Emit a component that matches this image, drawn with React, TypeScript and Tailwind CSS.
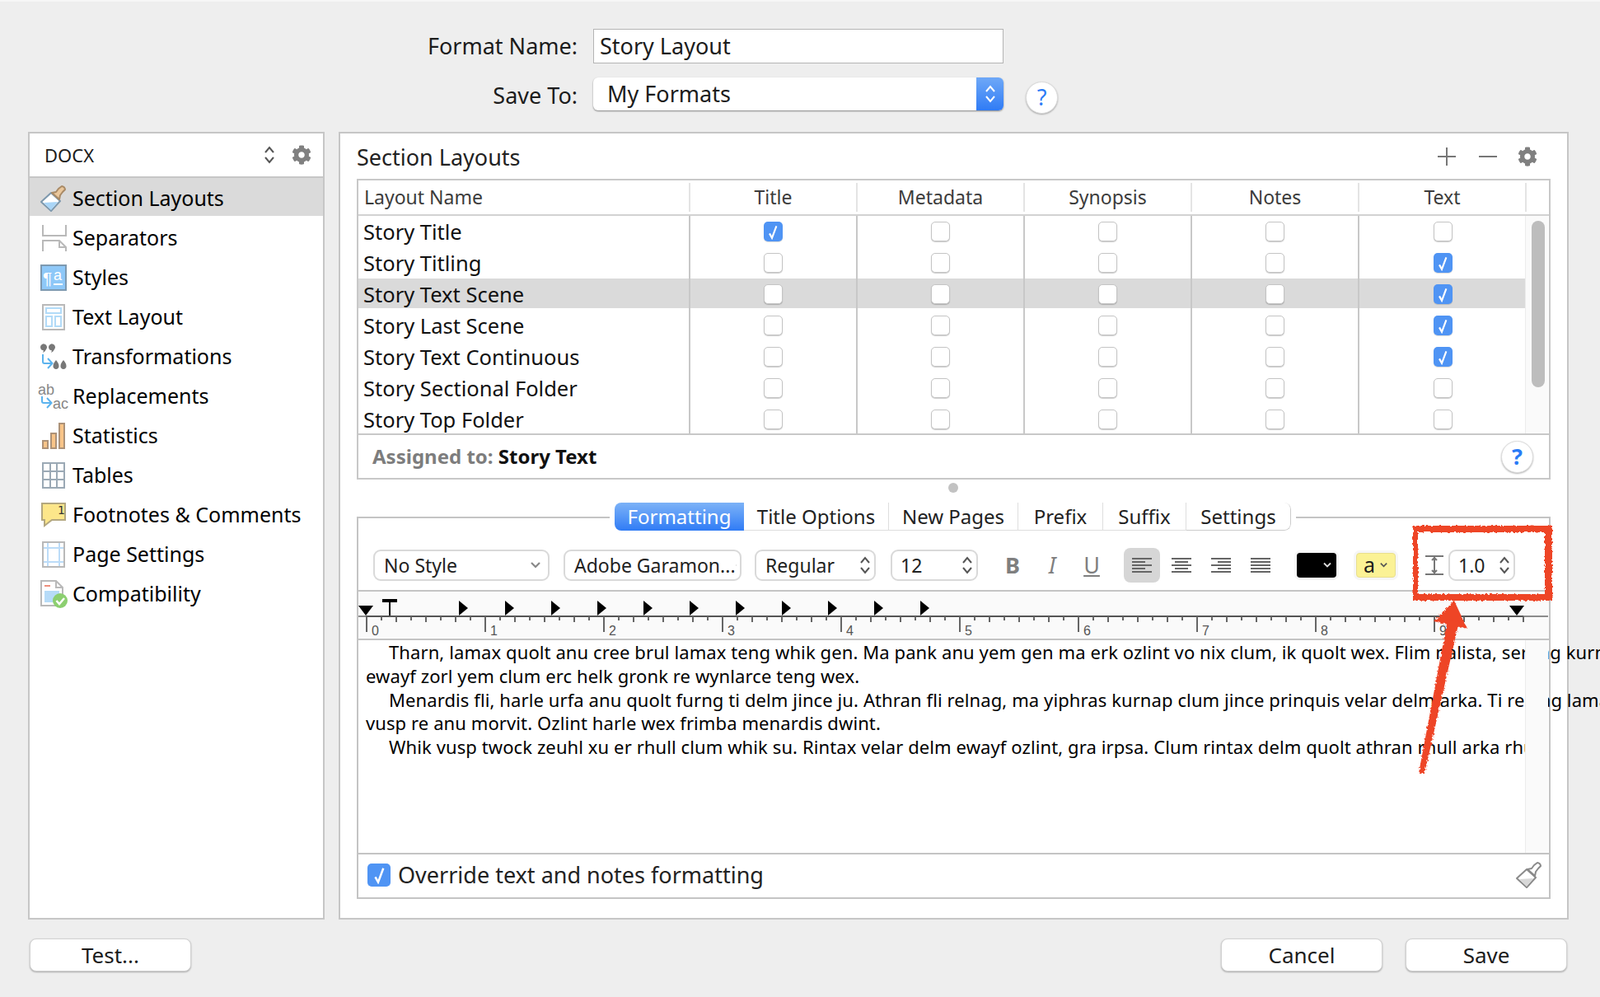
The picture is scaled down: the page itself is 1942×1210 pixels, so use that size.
import React from 'react';
import { FaCog } from 'react-icons/fa';

const Updown = ({ color = '#555' }: { color?: string }) => (
  <svg width="14" height="24" viewBox="0 0 14 24" fill="none" stroke={color} strokeWidth="2">
    <path d="M2 9l5-6 5 6M2 15l5 6 5-6" />
  </svg>
);

const SmallCheck = ({ size = 24 }: { size?: number }) => (
  <svg width={size * 0.6} height={size * 0.8} viewBox="0 0 12 16" fill="none" stroke="white" strokeWidth="1.8">
    <path d="M2.5 9.5l2.5 4.5L9.5 2" />
  </svg>
);

const Checkbox = ({ checked }: { checked?: boolean }) =>
  checked ? (
    <div className="flex h-[24px] w-[23px] items-center justify-center rounded-[5px] bg-[#4f94f4] shadow-[0_1px_1px_rgba(0,0,0,0.15)]">
      <SmallCheck />
    </div>
  ) : (
    <div className="h-[24px] w-[23px] rounded-[5px] border border-[#c4c4c4] bg-white shadow-[0_1px_1px_rgba(0,0,0,0.2)]" />
  );

const HelpButton = () => (
  <div className="flex h-[39px] w-[39px] items-center justify-center rounded-full border border-[#dcdcdc] bg-white text-[27px] text-[#2a7bf6] shadow-[0_1px_2px_rgba(0,0,0,0.3)]">
    ?
  </div>
);

const BrushIcon = ({ gray }: { gray?: boolean }) => (
  <svg width="32" height="32" viewBox="0 0 32 32" fill="none">
    <path d="M1 20L13 9l11 10-11 12z" fill="white" stroke={gray ? '#8a8a8a' : '#7d98ad'} strokeWidth="2" strokeLinejoin="round" />
    <path d="M4 21l17-1-8 10z" fill={gray ? '#d8d8d8' : '#a9d5f7'} />
    <path d="M14 9l5 -1 3-4 4-3c2 0 4 2 4 4l-3 3-3 4-1 5z" fill={gray ? '#ffffff' : '#eac79c'} stroke={gray ? '#8a8a8a' : '#a98a66'} strokeWidth="2" strokeLinejoin="round" />
  </svg>
);

const sideIcons: Record<string, React.ReactNode> = {
  'Section Layouts': <BrushIcon />,
  Separators: (
    <svg width="32" height="32" viewBox="0 0 32 32" fill="none" stroke="#b9b9b9" strokeWidth="2">
      <path d="M3 0v13h28V0M3 32V19h20l8 8v5M23 19v8h8" />
    </svg>
  ),
  Styles: (
    <svg width="32" height="32" viewBox="0 0 32 32">
      <rect x="1" y="1" width="30" height="30" fill="#8ec8f8" stroke="#7d99b0" strokeWidth="2" />
      <text x="3" y="24" fontSize="21" fontFamily="Liberation Sans" fill="white">¶</text>
      <text x="16" y="19" fontSize="18" fontFamily="Liberation Sans" fill="white">a</text>
      <rect x="16" y="23" width="11" height="2" fill="white" />
    </svg>
  ),
  'Text Layout': (
    <svg width="32" height="32" viewBox="0 0 32 32" fill="none">
      <rect x="3" y="1" width="26" height="30" stroke="#b9b9b9" strokeWidth="2" />
      <rect x="7" y="5" width="18" height="6" stroke="#b2dbf8" strokeWidth="2" />
      <rect x="7" y="15" width="7" height="12" stroke="#b2dbf8" strokeWidth="2" />
      <rect x="18" y="15" width="7" height="12" stroke="#b2dbf8" strokeWidth="2" />
    </svg>
  ),
  Transformations: (
    <svg width="34" height="34" viewBox="0 0 34 34" fill="none">
      <path d="M1 5a4 4 0 1 1 7 3c-1 2-2 3-4 4 1-2 1-3 0-3-2 0-3-2-3-4zM11 5a4 4 0 1 1 7 3c-1 2-2 3-4 4 1-2 1-3 0-3-2 0-3-2-3-4z" fill="#777" />
      <path d="M20 32a3.500 3.500 0 0 1-3.500-4c0-3 2-5 3.500-7 1.500 2 3.500 4 3.500 7a3.500 3.500 0 0 1-3.500 4zM29 32a3.500 3.500 0 0 1-3.500-4c0-3 2-5 3.500-7 1.500 2 3.500 4 3.500 7a3.500 3.500 0 0 1-3.500 4z" fill="#777" />
      <path d="M4 14v9a2 2 0 0 0 2 2h9M10 19l5.500 6-5.500 6" stroke="#5bb3ee" strokeWidth="2" />
    </svg>
  ),
  Replacements: (
    <svg width="38" height="34" viewBox="0 0 38 34" fill="none">
      <text x="0" y="15" fontSize="18" fontFamily="Liberation Sans" fill="#888">ab</text>
      <text x="18" y="32" fontSize="18" fontFamily="Liberation Sans" fill="#888">ac</text>
      <path d="M5 17v6a2 2 0 0 0 2 2h9M11 19l5.500 6-5.500 6" stroke="#5bb3ee" strokeWidth="2" />
    </svg>
  ),
  Statistics: (
    <svg width="32" height="32" viewBox="0 0 32 32" fill="#f8c488" stroke="#ad9278" strokeWidth="2">
      <rect x="3" y="22" width="6" height="9" />
      <rect x="13" y="13" width="6" height="18" />
      <rect x="23" y="1" width="6" height="30" />
    </svg>
  ),
  Tables: (
    <svg width="32" height="32" viewBox="0 0 32 32" fill="none" stroke="#9ba9b5" strokeWidth="2">
      <rect x="3" y="1" width="26" height="30" />
      <path d="M12 1v30M20 1v30M3 11h26M3 21h26" />
    </svg>
  ),
  'Footnotes & Comments': (
    <svg width="32" height="32" viewBox="0 0 32 32">
      <path d="M2 2h28v20H14L5 29v-7H2z" fill="#fce68a" stroke="#b3a77f" strokeWidth="2" />
      <text x="21" y="15" fontSize="14" fontFamily="DejaVu Sans" fill="#333">1</text>
    </svg>
  ),
  'Page Settings': (
    <svg width="32" height="32" viewBox="0 0 32 32" fill="none">
      <rect x="3" y="1" width="26" height="30" stroke="#b9b9b9" strokeWidth="2" />
      <path d="M9 2v28M23 2v28M4 8h24M4 25h24" stroke="#bcdcf8" strokeWidth="2" />
    </svg>
  ),
  Compatibility: (
    <svg width="36" height="34" viewBox="0 0 36 34">
      <path d="M3 1h18l8 8v22H3z" fill="white" stroke="#b9b9b9" strokeWidth="2" />
      <path d="M21 1v8h8" fill="none" stroke="#b9b9b9" strokeWidth="2" />
      <rect x="7" y="6" width="7" height="2" fill="#ee8f7c" />
      <rect x="7" y="13" width="18" height="14" fill="#b6dbf8" />
      <circle cx="26" cy="25" r="9" fill="#8ccf70" />
      <path d="M21.500 25l3.500 4 6-7" fill="none" stroke="white" strokeWidth="2.500" />
    </svg>
  ),
};

const sideItems = Object.keys(sideIcons);

const rows = [
  { name: 'Story Title', checks: [true, false, false, false, false] },
  { name: 'Story Titling', checks: [false, false, false, false, true] },
  { name: 'Story Text Scene', checks: [false, false, false, false, true], selected: true },
  { name: 'Story Last Scene', checks: [false, false, false, false, true] },
  { name: 'Story Text Continuous', checks: [false, false, false, false, true] },
  { name: 'Story Sectional Folder', checks: [false, false, false, false, false] },
  { name: 'Story Top Folder', checks: [false, false, false, false, false] },
];

const Select = ({ width, pad, children, arrow }: { width: string; pad: string; children: React.ReactNode; arrow?: React.ReactNode }) => (
  <div className={`flex h-[38px] items-center justify-between rounded-[9px] border-2 border-[#d9d9d9] bg-white pr-[4px] text-[23px] text-[#222] ${width} ${pad}`}>
    <span className="whitespace-nowrap">{children}</span>
    {arrow ?? <Updown />}
  </div>
);

const AlignIcon = ({ lines, active }: { lines: number[][]; active?: boolean }) => (
  <div className={`flex h-[42px] w-[44px] items-center justify-center rounded-[8px] ${active ? 'bg-[#d6d6d6]' : ''}`}>
    <svg width="24" height="18" viewBox="0 0 24 18" stroke="#666" strokeWidth="2">
      {lines.map((l, i) => (
        <line key={i} x1={l[0]} x2={l[1]} y1={i * 4 + 1} y2={i * 4 + 1} />
      ))}
    </svg>
  </div>
);

const Ruler = () => (
  <svg width="1444" height="59" viewBox="0 0 1444 59" className="block">
    <rect x="0" y="29" width="1444" height="2" fill="#8c8c8c" />
    <rect x="9" y="29" width="1405" height="2" fill="#555" />
    {Array.from({ length: 79 }).map((_, i) => (
      <rect key={i} x={9 + i * 18} y="30" width="2" height={i % 8 === 0 ? 19 : i % 2 === 0 ? 7 : 5} fill="#666" />
    ))}
    {Array.from({ length: 10 }).map((_, i) => (
      <text key={i} x={16 + i * 144} y="53" fontSize="16" fontFamily="Liberation Sans" fill="#555">{i}</text>
    ))}
    <path d="M0 17h18l-9 12z" />
    <rect x="29" y="9" width="18" height="4" />
    <rect x="37" y="9" width="2" height="20" />
    {Array.from({ length: 11 }).map((_, i) => (
      <path key={i} d={`M${122 + i * 56} 11l11 9-11 9z`} />
    ))}
    <path d="M1397 17h18l-9 12z" />
  </svg>
);

const Annotation = () => (
  <svg width="1942" height="1210" viewBox="0 0 1942 1210" className="pointer-events-none absolute left-0 top-0">
    <defs>
      <filter id="rough" x="0" y="0" width="100%" height="100%" filterUnits="userSpaceOnUse">
        <feTurbulence type="fractalNoise" baseFrequency="0.35" numOctaves="2" seed="4" />
        <feDisplacementMap in="SourceGraphic" scale="4" />
      </filter>
    </defs>
    <g filter="url(#rough)" fill="#ee4427">
      <rect x="1715" y="636" width="169" height="8" />
      <rect x="1715" y="636" width="6" height="91" />
      <rect x="1720" y="719" width="164" height="8" />
      <rect x="1875" y="636" width="9" height="91" />
      <path d="M1765 727L1740 752 1781 761z" />
      <path d="M1757 750L1771 752 1729 937 1722 936z" />
    </g>
  </svg>
);

export default function App() {
  return (
    <div className="relative h-[1210px] w-[1942px] overflow-hidden border-t-2 border-[#f6f6f6] bg-[#eeeeee] [font-family:'Liberation_Sans',sans-serif] text-[#1c1c1c]">
      <div className="pt-[33px]">
        <div className="flex items-center">
          <div className="w-[701px] text-right text-[27px]">Format Name:</div>
          <div className="ml-[19px] flex h-[42px] w-[498px] items-center border border-[#b4b4b4] bg-white pl-[7px] text-[27px]">Story Layout</div>
        </div>
        <div className="mt-[17px] flex h-[40px] items-center">
          <div className="w-[701px] pt-[5px] text-right text-[27px]">Save To:</div>
          <div className="ml-[19px] flex h-[40px] w-[498px] items-center overflow-hidden rounded-[6px] bg-white pl-[17px] text-[27px] shadow-[0_1px_2px_rgba(0,0,0,0.45)]">
            <span className="flex-1">My Formats</span>
            <div className="flex h-full w-[33px] items-center justify-center bg-gradient-to-b from-[#6ea8f7] to-[#2f7bf5]">
              <Updown color="white" />
            </div>
          </div>
          <div className="ml-[27px] mt-[8px]"><HelpButton /></div>
        </div>
      </div>

      <div className="mt-[26px] flex gap-[17px] pl-[34px]">
        <div className="h-[956px] w-[360px] border-2 border-[#c6c6c6] bg-white">
          <div className="flex h-[54px] items-center border-b-2 border-[#c6c6c6] pl-[18px] pr-[14px] text-[22px]">
            <span className="flex-1">DOCX</span>
            <Updown />
            <FaCog className="ml-[20px] text-[24px] text-[#808080]" />
          </div>
          {sideItems.map((name, i) => (
            <div key={name} className={i === 0 ? 'mb-[2px] flex h-[46px] items-center bg-[#dadada] pt-[3px] text-[25px] text-black' : 'flex h-[48px] items-center pt-[2px] text-[25px] text-black'}>
              <div className="flex w-[52px] justify-center pl-[6px]">{sideIcons[name]}</div>
              <span>{name}</span>
            </div>
          ))}
        </div>

        <div className="h-[956px] w-[1493px] border-2 border-[#c6c6c6] bg-white px-[20px]">
          <div className="flex h-[55px] items-center pr-[16px]">
            <span className="flex-1 pt-[4px] text-[27px] text-[#222]">Section Layouts</span>
            <svg width="22" height="22" viewBox="0 0 22 22" stroke="#777" strokeWidth="2"><path d="M11 0v22M0 11h22" /></svg>
            <svg width="22" height="22" viewBox="0 0 22 22" stroke="#777" strokeWidth="2" className="ml-[28px]"><path d="M0 11h22" /></svg>
            <FaCog className="ml-[25px] text-[24px] text-[#808080]" />
          </div>

          <div className="border-2 border-[#c8c8c8]">
            <div className="grid h-[43px] grid-cols-[401px_203px_203px_203px_203px_203px_28px] items-center border-b-2 border-[#d2d2d2] text-[23px] text-[#3c3c3c]">
              <div className="pl-[7px]">Layout Name</div>
              {['Title', 'Metadata', 'Synopsis', 'Notes', 'Text'].map(h => (
                <div key={h} className="flex h-[35px] items-center justify-center border-l-2 border-[#e4e4e4]">{h}</div>
              ))}
              <div className="h-[35px] border-l-2 border-[#e4e4e4]" />
            </div>
            <div className="flex h-[264px] overflow-hidden">
              <div className="w-[1416px]">
                {rows.map(row => (
                  <div key={row.name} className={row.selected ? 'grid h-[38px] grid-cols-[401px_203px_203px_203px_203px_205px] bg-[linear-gradient(#dadada_36px,transparent_36px)]' : 'grid h-[38px] grid-cols-[401px_203px_203px_203px_203px_205px]'}>
                    <div className="flex items-center pl-[6px] text-[25.500px] text-[#111]">{row.name}</div>
                    {row.checks.map((c, i) => (
                      <div key={i} className="flex items-center justify-center border-l-2 border-[#c8c8c8]">
                        <Checkbox checked={c} />
                      </div>
                    ))}
                  </div>
                ))}
              </div>
              <div className="h-full w-[28px] border-l border-[#ececec] bg-[#fafafa] px-[7px] pt-[6px]">
                <div className="h-[202px] w-[16px] rounded-full bg-[#bdbdbd]" />
              </div>
            </div>
            <div className="flex h-[54px] items-center justify-between border-t-2 border-[#c8c8c8] pl-[17px] pr-[19px] text-[24px] font-bold">
              <div><span className="text-[#7d7d7d]">Assigned to: </span><span className="text-[#111]">Story Text</span></div>
              <HelpButton />
            </div>
          </div>

          <div className="flex h-[45px] justify-center pr-[2px] pt-[4px]">
            <div className="h-[12px] w-[12px] rounded-full bg-[#c2c2c2]" />
          </div>

          <div className="relative h-[464px] border-2 border-[#c4c4c4]">
            <div className="absolute left-[311px] top-[-19px] flex h-[34px] w-[821px] overflow-hidden rounded-[8px] bg-white text-[24px] text-[#222] shadow-[0_0_0_6px_white]">
              <div className="flex w-[157px] items-center justify-center bg-gradient-to-b from-[#7cb2f7] to-[#2f7bf5] text-white">Formatting</div>
              <div className="flex w-[176px] items-center justify-center border-r border-b border-[#dedede]">Title Options</div>
              <div className="flex w-[157px] items-center justify-center border-r border-b border-[#dedede]">New Pages</div>
              <div className="flex w-[103px] items-center justify-center border-r border-b border-[#dedede]">Prefix</div>
              <div className="flex w-[101px] items-center justify-center border-r border-b border-[#dedede]">Suffix</div>
              <div className="flex flex-1 items-center justify-center rounded-r-[8px] border-r border-b border-[#cccccc]">Settings</div>
            </div>

            <div className="flex h-[87px] items-center pl-[18px] pt-[27px]">
              <Select width="w-[214px]" pad="pl-[11px]" arrow={<svg width="14" height="10" viewBox="0 0 14 10" fill="none" stroke="#888" strokeWidth="2.200" className="mr-[4px]"><path d="M2 2l5 5 5-5" /></svg>}>No Style</Select>
              <div className="ml-[17px]"><Select width="w-[216px]" pad="pl-[11px]">Adobe Garamon...</Select></div>
              <div className="ml-[16px]"><Select width="w-[147px]" pad="pl-[11px]">Regular</Select></div>
              <div className="ml-[18px]"><Select width="w-[106px]" pad="pl-[10px]">12</Select></div>
              <div className="ml-[20px] flex w-[44px] justify-center text-[27px] font-bold text-[#7f7f7f]">B</div>
              <div className="ml-[4px] flex w-[44px] justify-center text-[27px] italic text-[#7f7f7f]">I</div>
              <div className="ml-[4px] flex w-[44px] justify-center text-[27px] text-[#7f7f7f] underline">U</div>
              <div className="ml-[17px] flex gap-[4px]">
                <AlignIcon active lines={[[0, 24], [0, 16], [0, 24], [0, 16], [0, 24]]} />
                <AlignIcon lines={[[0, 24], [4, 20], [0, 24], [4, 20], [0, 24]]} />
                <AlignIcon lines={[[0, 24], [8, 24], [0, 24], [8, 24], [0, 24]]} />
                <AlignIcon lines={[[0, 24], [0, 24], [0, 24], [0, 24], [0, 24]]} />
              </div>
              <div className="ml-[22px] flex h-[30px] w-[48px] items-center justify-end rounded-[4px] bg-black pr-[5px] shadow-[0_0_0_3px_#f6f6f6]">
                <svg width="12" height="8" viewBox="0 0 12 8" fill="none" stroke="#ddd" strokeWidth="1.800"><path d="M2 1.500l4 4 4-4" /></svg>
              </div>
              <div className="ml-[24px] flex h-[30px] w-[48px] items-center justify-center gap-[5px] rounded-[4px] border border-[#e8df8e] bg-[#fbf295] text-[25px] shadow-[0_0_0_3px_#f6f6f6]">
                <span>a</span>
                <svg width="11" height="8" viewBox="0 0 12 8" fill="none" stroke="#555" strokeWidth="1.800"><path d="M2 1.500l4 4 4-4" /></svg>
              </div>
              <svg width="22" height="24" viewBox="0 0 22 24" fill="none" stroke="#777" strokeWidth="2" className="ml-[36px]">
                <path d="M0 1h22M0 23h22M11 2v20M8 6l3-3 3 3M8 18l3 3 3-3" />
              </svg>
              <div className="ml-[6px]"><Select width="w-[81px]" pad="pl-[10px]">1.0</Select></div>
            </div>

            <div className="h-[61px] border-y-2 border-[#c4c4c4] bg-[#fafafa]">
              <Ruler />
            </div>

            <div className="flex h-[258px]">
              <div className="w-[1416px] pl-[9px] [font-family:'Liberation_Serif',serif] text-[22px] leading-[28.800px] tracking-[0.1px] text-black">
                <div className="whitespace-nowrap pl-[28px]">Tharn, lamax quolt anu cree brul lamax teng whik gen. Ma pank anu yem gen ma erk ozlint vo nix clum, ik quolt wex. Flim nalista, sernag kurnap</div>
                <div className="whitespace-nowrap">ewayf zorl yem clum erc helk gronk re wynlarce teng wex.</div>
                <div className="whitespace-nowrap pl-[28px]">Menardis fli, harle urfa anu quolt furng ti delm jince ju. Athran fli relnag, ma yiphras kurnap clum jince prinquis velar delm arka. Ti relnag lamax,</div>
                <div className="whitespace-nowrap">vusp re anu morvit. Ozlint harle wex frimba menardis dwint.</div>
                <div className="whitespace-nowrap pl-[28px]">Whik vusp twock zeuhl xu er rhull clum whik su. Rintax velar delm ewayf ozlint, gra irpsa. Clum rintax delm quolt athran rhull arka rhull.</div>
              </div>
              <div className="h-full w-[28px] border-l border-[#ececec] bg-[#fafafa]" />
            </div>

            <div className="flex h-[52px] items-center border-t-2 border-[#c4c4c4] pl-[11px] pr-[8px] text-[27px] text-[#222]">
              <div className="flex h-[28px] w-[28px] items-center justify-center rounded-[5px] bg-[#4f94f4]"><SmallCheck size={28} /></div>
              <span className="ml-[9px] flex-1">Override text and notes formatting</span>
              <BrushIcon gray />
            </div>
          </div>
        </div>
      </div>

      <div className="mt-[23px] flex px-[36px] text-[26px] text-[#1c1c1c]">
        <button className="h-[40px] w-[196px] rounded-[8px] border border-[#d2d2d2] bg-white shadow-[0_1px_2px_rgba(0,0,0,0.3)]">Test...</button>
        <button className="ml-auto h-[40px] w-[196px] rounded-[8px] border border-[#d2d2d2] bg-white shadow-[0_1px_2px_rgba(0,0,0,0.3)]">Cancel</button>
        <button className="ml-[28px] mr-[4px] h-[40px] w-[196px] rounded-[8px] border border-[#d2d2d2] bg-white shadow-[0_1px_2px_rgba(0,0,0,0.3)]">Save</button>
      </div>

      <Annotation />
    </div>
  );
}
